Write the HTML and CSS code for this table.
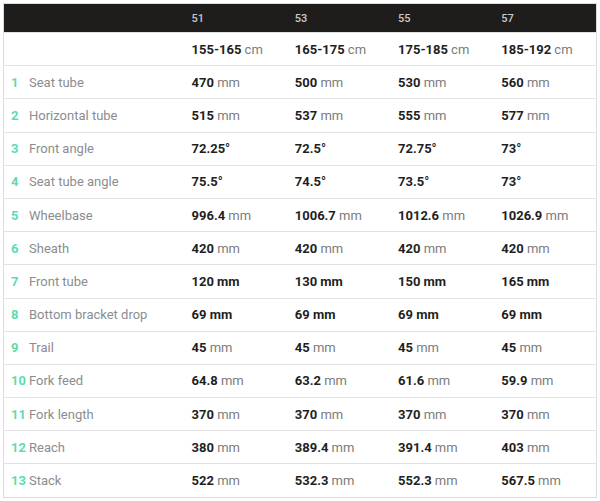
FILE: index.html
```html
<!DOCTYPE html>
<html>
<head>
<meta charset="utf-8">
<link rel="stylesheet" href="styles.css">
</head>
<body>
<table class="geo">
  <colgroup><col class="c-label"><col class="c-val"><col class="c-val"><col class="c-val"><col class="c-val"></colgroup>
  <thead>
    <tr><th></th><th>51</th><th>53</th><th>55</th><th>57</th></tr>
  </thead>
  <tbody>
    <tr><td></td><td><b>155-165</b> <span class="u">cm</span></td><td><b>165-175</b> <span class="u">cm</span></td><td><b>175-185</b> <span class="u">cm</span></td><td><b>185-192</b> <span class="u">cm</span></td></tr>
    <tr><td><span class="n">1</span>Seat tube</td><td><b>470</b> <span class="u">mm</span></td><td><b>500</b> <span class="u">mm</span></td><td><b>530</b> <span class="u">mm</span></td><td><b>560</b> <span class="u">mm</span></td></tr>
    <tr><td><span class="n">2</span>Horizontal tube</td><td><b>515</b> <span class="u">mm</span></td><td><b>537</b> <span class="u">mm</span></td><td><b>555</b> <span class="u">mm</span></td><td><b>577</b> <span class="u">mm</span></td></tr>
    <tr><td><span class="n">3</span>Front angle</td><td><b>72.25°</b></td><td><b>72.5°</b></td><td><b>72.75°</b></td><td><b>73°</b></td></tr>
    <tr><td><span class="n">4</span>Seat tube angle</td><td><b>75.5°</b></td><td><b>74.5°</b></td><td><b>73.5°</b></td><td><b>73°</b></td></tr>
    <tr><td><span class="n">5</span>Wheelbase</td><td><b>996.4</b> <span class="u">mm</span></td><td><b>1006.7</b> <span class="u">mm</span></td><td><b>1012.6</b> <span class="u">mm</span></td><td><b>1026.9</b> <span class="u">mm</span></td></tr>
    <tr><td><span class="n">6</span>Sheath</td><td><b>420</b> <span class="u">mm</span></td><td><b>420</b> <span class="u">mm</span></td><td><b>420</b> <span class="u">mm</span></td><td><b>420</b> <span class="u">mm</span></td></tr>
    <tr><td><span class="n">7</span>Front tube</td><td><b>120 mm</b></td><td><b>130 mm</b></td><td><b>150 mm</b></td><td><b>165 mm</b></td></tr>
    <tr><td><span class="n">8</span>Bottom bracket drop</td><td><b>69 mm</b></td><td><b>69 mm</b></td><td><b>69 mm</b></td><td><b>69 mm</b></td></tr>
    <tr><td><span class="n">9</span>Trail</td><td><b>45</b> <span class="u">mm</span></td><td><b>45</b> <span class="u">mm</span></td><td><b>45</b> <span class="u">mm</span></td><td><b>45</b> <span class="u">mm</span></td></tr>
    <tr><td><span class="n">10</span>Fork feed</td><td><b>64.8</b> <span class="u">mm</span></td><td><b>63.2</b> <span class="u">mm</span></td><td><b>61.6</b> <span class="u">mm</span></td><td><b>59.9</b> <span class="u">mm</span></td></tr>
    <tr><td><span class="n">11</span>Fork length</td><td><b>370</b> <span class="u">mm</span></td><td><b>370</b> <span class="u">mm</span></td><td><b>370</b> <span class="u">mm</span></td><td><b>370</b> <span class="u">mm</span></td></tr>
    <tr><td><span class="n">12</span>Reach</td><td><b>380</b> <span class="u">mm</span></td><td><b>389.4</b> <span class="u">mm</span></td><td><b>391.4</b> <span class="u">mm</span></td><td><b>403</b> <span class="u">mm</span></td></tr>
    <tr><td><span class="n">13</span>Stack</td><td><b>522</b> <span class="u">mm</span></td><td><b>532.3</b> <span class="u">mm</span></td><td><b>552.3</b> <span class="u">mm</span></td><td><b>567.5</b> <span class="u">mm</span></td></tr>
  </tbody>
</table>
</body>
</html>
```

FILE: styles.css
```css
html, body {
  margin: 0;
  padding: 0;
  background: #fff;
}
body {
  padding: 3px;
  font-family: Roboto, "Liberation Sans", sans-serif;
}
.geo {
  width: 594px;
  border-collapse: collapse;
  border: 1px solid #dcdcdc;
  table-layout: fixed;
}
.c-label { width: 180px; }
.geo thead th {
  background: #1e1d1c;
  color: #c9c9c9;
  font-size: 11px;
  font-weight: 500;
  text-align: left;
  height: 28px;
  padding: 0 0 0 8px;
}
.geo tbody td {
  height: 32.2px;
  padding: 0 0 0 8px;
  border-top: 1px solid #e3e3e3;
  font-size: 13px;
  color: #222;
  white-space: nowrap;
}
.geo tbody td:first-child {
  padding-left: 7px;
  color: #8b8d90;
}
.geo b {
  font-weight: 700;
  color: #1f1f1f;
}
.u {
  color: #7b7b7b;
}
.n {
  display: inline-block;
  width: 18px;
  color: #5ddcb1;
  font-weight: 700;
}
```
